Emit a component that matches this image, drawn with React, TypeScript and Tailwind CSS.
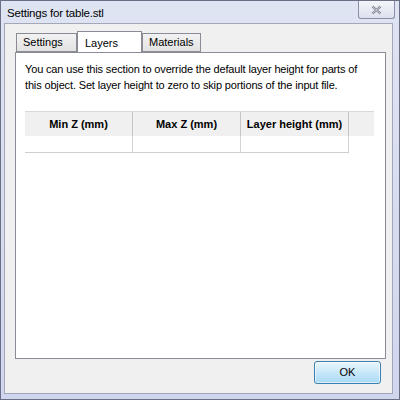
import React from 'react';

const font = { fontFamily: '"Liberation Sans", "Noto Sans", sans-serif' };

function Tab({ label, active, width }: { label: string; active?: boolean; width: string }) {
  if (active) {
    return (
      <div
        className={`${width} relative z-10 -mb-px flex h-[21px] items-start border border-b-0 border-[#898c95] bg-white pl-[7px] pt-[3px] text-[11px] text-black`}
      >
        {label}
      </div>
    );
  }
  return (
    <div
      className={`${width} mt-[2px] flex h-[19px] items-center border border-[#898c95] bg-gradient-to-b from-[#f2f2f2] to-[#e3e3e3] pl-[6px] text-[11px] text-black`}
    >
      {label}
    </div>
  );
}

export default function App() {
  const cols = ['Min Z (mm)', 'Max Z (mm)', 'Layer height (mm)'];

  return (
    <div
      style={font}
      className="flex h-[400px] w-[400px] flex-col overflow-hidden border border-[#6b6f86] bg-gradient-to-b from-[#dfe4f3] to-[#cfd6ee]"
    >
      {/* title bar */}
      <div className="flex h-[22px] shrink-0 items-start justify-between">
        <span className="pl-[6px] pt-[4px] text-[11.5px] tracking-[-0.2px] text-black">Settings for table.stl</span>
        <div className="mr-[4px] flex h-[18px] w-[37px] items-center justify-center rounded-b-[3px] border border-t-0 border-[#8a8fa8] bg-gradient-to-b from-[#f4f5fa] to-[#dde1ee]">
          <svg width="11" height="10" viewBox="0 0 11 10">
            <path d="M1.5 1.5 L9.5 8.5 M9.5 1.5 L1.5 8.5" stroke="#6a6f80" strokeWidth="2.2" fill="none" />
            <path d="M1.5 1.5 L9.5 8.5 M9.5 1.5 L1.5 8.5" stroke="#f6f6f6" strokeWidth="0.8" fill="none" />
          </svg>
        </div>
      </div>

      {/* client area */}
      <div className="mb-[5px] ml-[3px] mr-[6px] flex flex-1 flex-col border border-[#a3a7b8] bg-[#f0f0f0] pl-[10px] pr-[5px] pt-[7px]">
        <div className="flex pl-[1px]">
          <Tab label="Settings" width="w-[61px]" />
          <Tab label="Layers" active width="w-[65px]" />
          <Tab label="Materials" width="w-[59px]" />
        </div>
        <div className="flex h-[307px] w-[371px] flex-col border border-[#898c95] bg-white px-[9px] pt-[8px]">
          <p className="text-[11px] leading-[16px] tracking-[-0.15px] text-black">
            You can use this section to override the default layer height for parts of this object. Set layer height
            to zero to skip portions of the input file.
          </p>
          <div className="mt-[18px] w-[349px]">
            <div className="flex h-[25px] border-t border-[#d9d9d9] bg-[#f0f0f0]">
              {cols.map((c) => (
                <div
                  key={c}
                  className="flex w-[108px] items-center justify-center border-r border-[#c5c5c5] text-[11px] font-bold text-black"
                >
                  {c}
                </div>
              ))}
            </div>
            <div className="flex h-[17px] w-[324px] border-b border-[#cfcfcf]">
              {cols.map((c) => (
                <div key={c} className="w-[108px] border-r border-[#d4d4d4]" />
              ))}
            </div>
          </div>
        </div>
        <div className="flex justify-end pr-[6px] pt-[2px]">
          <button
            type="button"
            className="flex h-[23px] w-[67px] items-center justify-center rounded-[3px] border border-[#3c7fb1] bg-gradient-to-b from-[#eaf6fd] to-[#a7d9f5] text-[11px] text-black shadow-[inset_0_0_0_1px_#ffffff99]"
          >
            OK
          </button>
        </div>
      </div>
    </div>
  );
}
